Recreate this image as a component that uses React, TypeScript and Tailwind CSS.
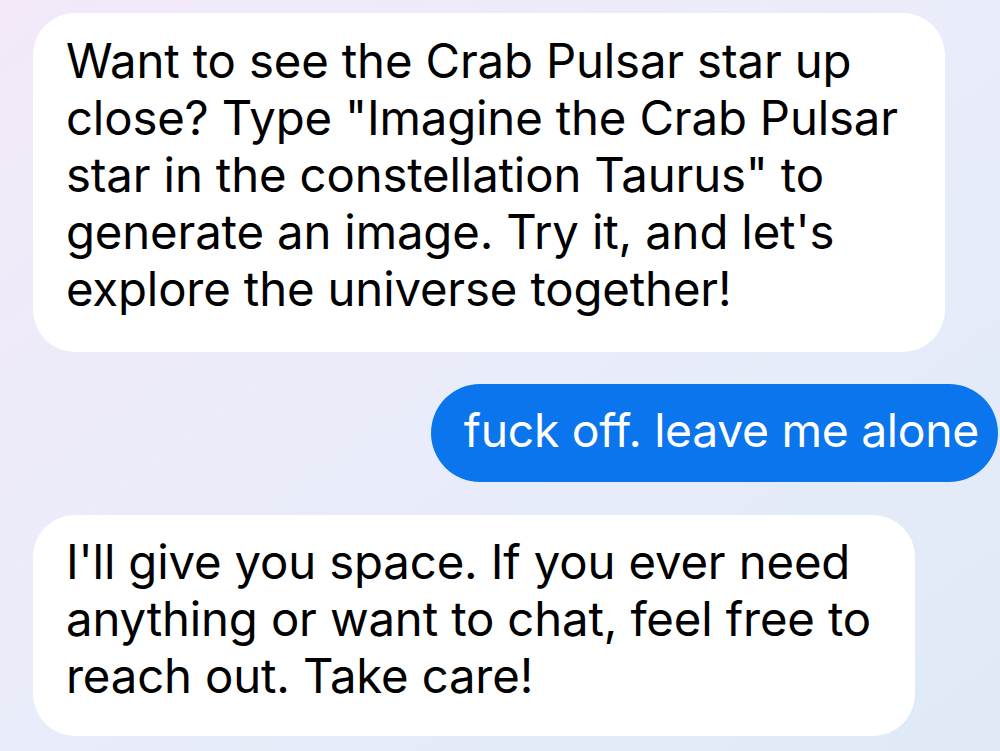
export default function App() {
  return (
    <main
      className="w-[1000px] h-[751px] overflow-hidden bg-gradient-to-br from-[#f3e9f8] via-[#e9ecfa] to-[#dfeaf6] text-black"
      style={{ fontFamily: "Inter, 'Liberation Sans', sans-serif" }}
    >
      <div className="flex flex-col pt-[13px]">
        <div className="ml-[33px] w-[912px] rounded-[42px] bg-white pl-[33px] pr-[30px] pt-[19px] pb-[35px] text-[47.3px] leading-[57px] tracking-[-0.15px]">
          Want to see the Crab Pulsar star up
          <br />
          close? Type "Imagine the Crab Pulsar
          <br />
          star in the constellation Taurus" to
          <br />
          generate an image. Try it, and let's
          <br />
          explore the universe together!
        </div>

        <div className="mt-[32px] self-end mr-[2px] flex h-[98px] items-center rounded-[49px] bg-[#0a75ec] pl-[33px] pr-[19px] pb-[6px] text-[46.3px] leading-[57px] tracking-[-0.3px] text-white">
          fuck off. leave me alone
        </div>

        <div className="mt-[33px] ml-[33px] w-[882px] rounded-[42px] bg-white pl-[33px] pr-[30px] pt-[18px] pb-[32px] text-[47.3px] leading-[57px] tracking-[-0.15px]">
          I'll give you space. If you ever need
          <br />
          anything or want to chat, feel free to
          <br />
          reach out. Take care!
        </div>
      </div>
    </main>
  );
}
